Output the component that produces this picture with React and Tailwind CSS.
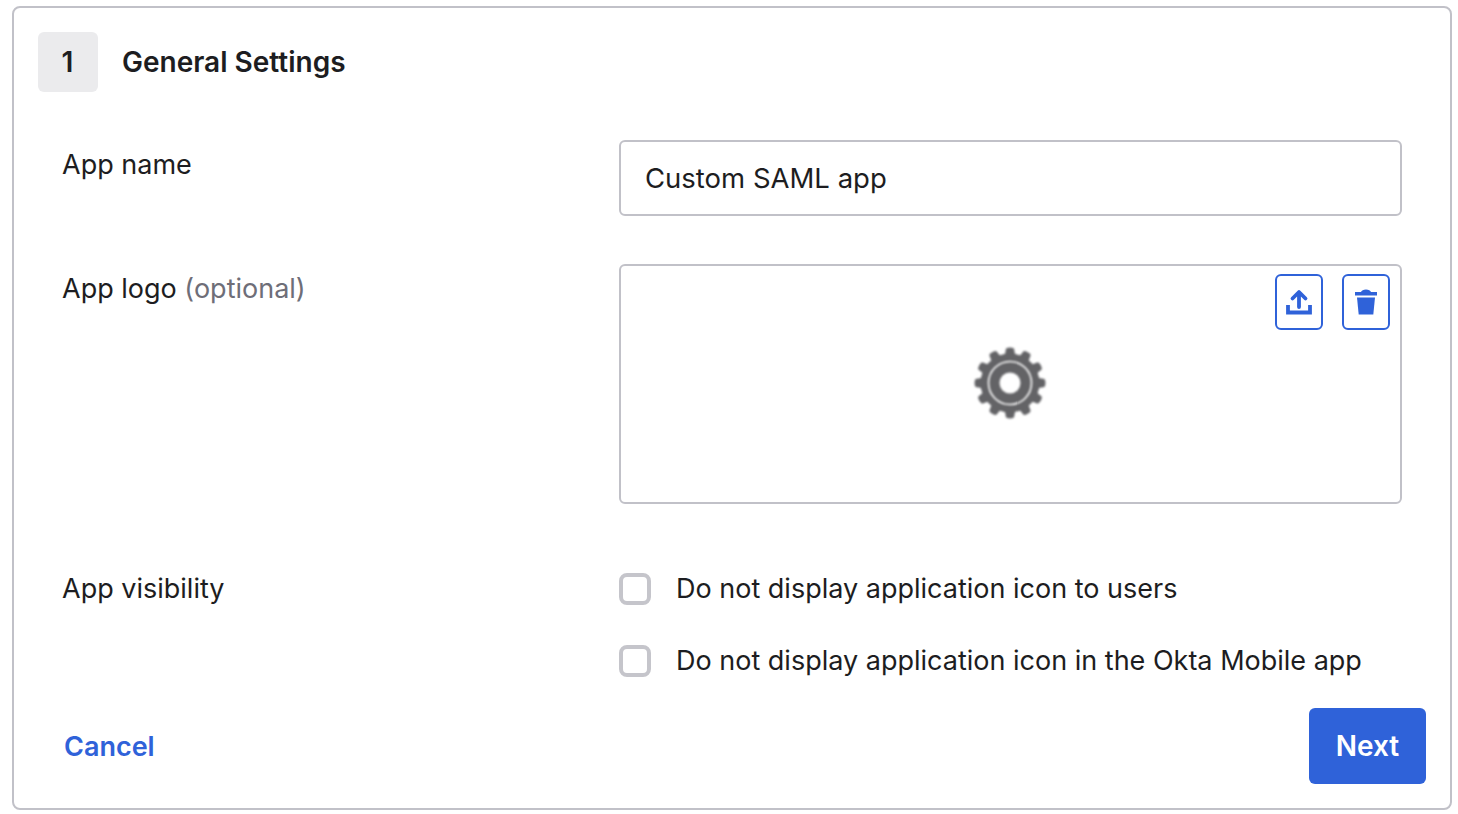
const TEETH = [0, 30, 60, 90, 120, 150, 180, 210, 240, 270, 300, 330];

function GearLogo() {
  return (
    <svg width="80" height="80" viewBox="0 0 80 80" className="blur-[1px] mb-[2px] mr-[1px]">
      {TEETH.map((deg) => (
        <path key={deg} d="M34.5 14 L36 5.5 Q40 3.5 44 5.5 L45.5 14 Z" fill="#636366" transform={`rotate(${deg} 40 40)`} />
      ))}
      <circle cx="40" cy="40" r="29.5" fill="#636366" />
      <circle cx="40" cy="40" r="21.5" fill="none" stroke="#ffffff" strokeWidth="1.6" />
      <circle cx="40" cy="40" r="10.5" fill="#ffffff" />
    </svg>
  );
}

function UploadIcon() {
  return (
    <svg width="26" height="26" viewBox="0 0 26 26" fill="none" stroke="#2f62d9" strokeWidth="3.8" strokeLinecap="round" strokeLinejoin="round">
      <path d="M13 18 V3.5 M6.5 9.5 L13 3 L19.5 9.5" />
      <path d="M2 16 V23.5 H24 V16" strokeLinecap="butt" strokeLinejoin="miter" />
    </svg>
  );
}

function TrashIcon() {
  return (
    <svg width="22" height="26" viewBox="0 0 22 26" fill="#2f62d9">
      <path d="M0 3 H6 Q7 0.5 11 0.5 Q15 0.5 16 3 H22 V6.5 H0 Z" />
      <path d="M2 8.5 H20 L18.3 25.5 H3.7 Z" />
    </svg>
  );
}

function Checkbox({ label }) {
  return (
    <label className="flex items-center h-8 gap-[25px]">
      <span className="w-8 h-8 rounded-lg border-4 border-[#c5c5cb] bg-white" />
      <span>{label}</span>
    </label>
  );
}

export default function App() {
  return (
    <div className="h-[814px] bg-white pt-[6px] pl-[12px] text-[#1d1d21] text-[27px] leading-8 font-['Inter','Noto_Sans',sans-serif] overflow-hidden">
      <div className="w-[1440px] h-[804px] border-2 border-[#c1c1c8] rounded-lg pt-6 pl-6 pr-6 flex flex-col">
        {/* Step header */}
        <div className="flex items-center gap-6 h-[60px] text-[28px]">
          <div className="w-[60px] h-[60px] rounded-md bg-[#ebebed] flex items-center justify-center font-semibold pr-[1px]">1</div>
          <h2 className="font-semibold">General Settings</h2>
        </div>

        {/* App name */}
        <div className="flex mt-12 pl-6">
          <div className="w-[557px] pt-[9px] h-[124px]">App name</div>
          <input
            readOnly
            value="Custom SAML app"
            className="w-[783px] h-[76px] border-2 border-[#c1c1c8] rounded-md px-6 outline-none text-[27.5px]"
          />
        </div>

        {/* App logo */}
        <div className="flex pl-6">
          <div className="w-[557px] pt-[9px]">
            App logo <span className="text-[#6e6e78]">(optional)</span>
          </div>
          <div className="relative w-[783px] h-[240px] border-2 border-[#c1c1c8] rounded-md flex items-center justify-center">
            <GearLogo />
            <div className="absolute top-2 right-[10px] flex gap-[19px]">
              <button className="w-12 h-14 rounded-md border-2 border-[#2f62d9] flex items-center justify-center"><UploadIcon /></button>
              <button className="w-12 h-14 rounded-md border-2 border-[#2f62d9] flex items-center justify-center"><TrashIcon /></button>
            </div>
          </div>
        </div>

        {/* App visibility */}
        <div className="flex mt-[69px] pl-6">
          <div className="w-[557px]">App visibility</div>
          <div className="flex flex-col gap-10">
            <Checkbox label="Do not display application icon to users" />
            <Checkbox label="Do not display application icon in the Okta Mobile app" />
          </div>
        </div>

        {/* Footer */}
        <div className="flex items-center justify-between mt-[31px] pl-[26px]">
          <a className="font-semibold text-[#2f62d9] pt-[2px]">Cancel</a>
          <button className="w-[117px] h-[76px] rounded-md bg-[#2f62d9] text-white font-semibold text-[28px]">Next</button>
        </div>
      </div>
    </div>
  );
}
